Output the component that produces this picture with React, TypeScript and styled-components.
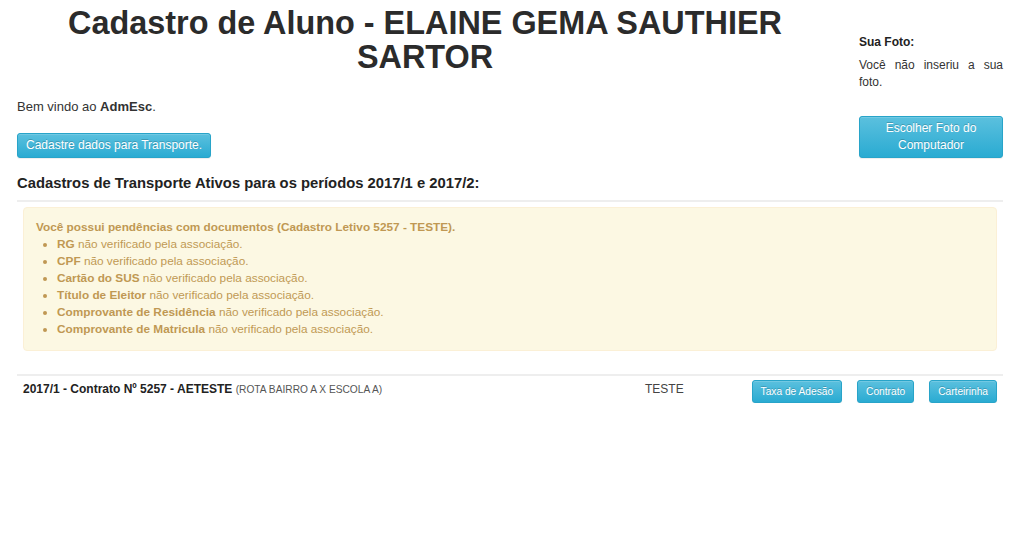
import React from "react";
import styled, { createGlobalStyle } from "styled-components";

const GlobalStyle = createGlobalStyle`
  html, body { margin: 0; padding: 0; background: #ffffff; }
  body {
    font-family: "Liberation Sans", Arial, Helvetica, sans-serif;
    color: #333333;
    font-size: 12px;
    line-height: 17px;
  }
  * { box-sizing: border-box; }
`;

const Page = styled.div`
  padding: 0 21px 0 17px;
`;

const Header = styled.div`
  display: grid;
  grid-template-columns: 816px 144px;
  column-gap: 26px;
`;

const MainColumn = styled.div`
  display: flex;
  flex-direction: column;
  align-items: flex-start;
`;

const Title = styled.h1`
  margin: 6px 0 0;
  align-self: stretch;
  text-align: center;
  font-size: 32.4px;
  line-height: 34px;
  font-weight: bold;
  color: #2b2b2b;
`;

const Welcome = styled.p`
  margin: 24px 0 0;
  font-size: 13px;
  line-height: 18px;
`;

const InfoButton = styled.button<{ $block?: boolean; $size?: "xs" | "sm" | "md" }>`
  display: ${(p) => (p.$block ? "block" : "inline-block")};
  width: ${(p) => (p.$block ? "100%" : "auto")};
  font-family: inherit;
  color: #ffffff;
  text-align: center;
  white-space: ${(p) => (p.$block ? "normal" : "nowrap")};
  cursor: pointer;
  border: 1px solid #28a4c9;
  border-radius: 3px;
  background-color: #2aabd2;
  background-image: linear-gradient(to bottom, #5bc0de 0%, #2aabd2 100%);
  box-shadow: inset 0 1px 0 rgba(255, 255, 255, 0.15), 0 1px 1px rgba(0, 0, 0, 0.075);
  text-shadow: 0 -1px 0 rgba(0, 0, 0, 0.2);
  font-size: ${(p) => (p.$size === "xs" ? "10.2px" : "12px")};
  line-height: ${(p) => (p.$size === "md" ? "17px" : "15px")};
  padding: ${(p) => (p.$size === "xs" ? "3px 8px" : p.$size === "md" ? "3px 12px" : "4px 8px")};
`;

const TransportButton = styled(InfoButton)`
  margin-top: 17px;
`;

const PhotoColumn = styled.div`
  padding-top: 34px;
  display: flex;
  flex-direction: column;
`;

const PhotoLabel = styled.div`
  font-weight: bold;
  font-size: 12px;
  line-height: 17px;
  color: #222222;
`;

const PhotoText = styled.p`
  margin: 6px 0 0;
  text-align: justify;
  font-size: 12px;
  line-height: 17px;
`;

const PhotoButton = styled(InfoButton)`
  margin-top: 25px;
`;

const SectionTitle = styled.h4`
  margin: 16px 0 0;
  font-size: 14.8px;
  line-height: 18px;
  font-weight: bold;
  color: #222222;
`;

const Rule = styled.hr<{ $top: number }>`
  margin: ${(p) => p.$top}px 0 0;
  border: 0;
  border-top: 2px solid #eeeeee;
  height: 0;
`;

const Alert = styled.div`
  margin: 5px 6px 0;
  padding: 11px 12px 12px;
  background: #fcf8e3;
  border: 1px solid #fbf0d6;
  border-radius: 4px;
  color: #c09853;
  font-size: 11.8px;
  line-height: 17px;
`;

const AlertTitle = styled.div`
  font-weight: bold;
`;

const AlertList = styled.ul`
  margin: 0;
  padding-left: 21px;
  list-style: disc;
`;

const ContractRow = styled.div`
  display: grid;
  grid-template-columns: 622px 1fr auto;
  align-items: start;
  padding: 4px 6px 0;
`;

const ContractText = styled.div`
  font-weight: bold;
  font-size: 12px;
  line-height: 17px;
  padding-top: 1px;
  color: #222222;
`;

const Route = styled.small`
  font-weight: normal;
  font-size: 10.2px;
  color: #555555;
`;

const Status = styled.div`
  font-size: 12px;
  line-height: 17px;
  padding-top: 1px;
  color: #444444;
`;

const ButtonGroup = styled.div`
  display: flex;
  gap: 15px;
`;

const docs = [
  "RG",
  "CPF",
  "Cartão do SUS",
  "Título de Eleitor",
  "Comprovante de Residência",
  "Comprovante de Matricula",
];

export default function App() {
  return (
    <>
      <GlobalStyle />
      <Page>
        <Header>
          <MainColumn>
            <Title>Cadastro de Aluno - ELAINE GEMA SAUTHIER SARTOR</Title>
            <Welcome>
              Bem vindo ao <b>AdmEsc</b>.
            </Welcome>
            <TransportButton $size="sm">Cadastre dados para Transporte.</TransportButton>
          </MainColumn>
          <PhotoColumn>
            <PhotoLabel>Sua Foto:</PhotoLabel>
            <PhotoText>Você não inseriu a sua foto.</PhotoText>
            <PhotoButton $block $size="md">
              Escolher Foto do Computador
            </PhotoButton>
          </PhotoColumn>
        </Header>

        <SectionTitle>Cadastros de Transporte Ativos para os períodos 2017/1 e 2017/2:</SectionTitle>
        <Rule $top={8} />

        <Alert>
          <AlertTitle>Você possui pendências com documentos (Cadastro Letivo 5257 - TESTE).</AlertTitle>
          <AlertList>
            {docs.map((d) => (
              <li key={d}>
                <b>{d}</b> não verificado pela associação.
              </li>
            ))}
          </AlertList>
        </Alert>

        <Rule $top={23} />
        <ContractRow>
          <ContractText>
            2017/1 - Contrato Nº 5257 - AETESTE <Route>(ROTA BAIRRO A X ESCOLA A)</Route>
          </ContractText>
          <Status>TESTE</Status>
          <ButtonGroup>
            <InfoButton $size="xs">Taxa de Adesão</InfoButton>
            <InfoButton $size="xs">Contrato</InfoButton>
            <InfoButton $size="xs">Carteirinha</InfoButton>
          </ButtonGroup>
        </ContractRow>
      </Page>
    </>
  );
}
